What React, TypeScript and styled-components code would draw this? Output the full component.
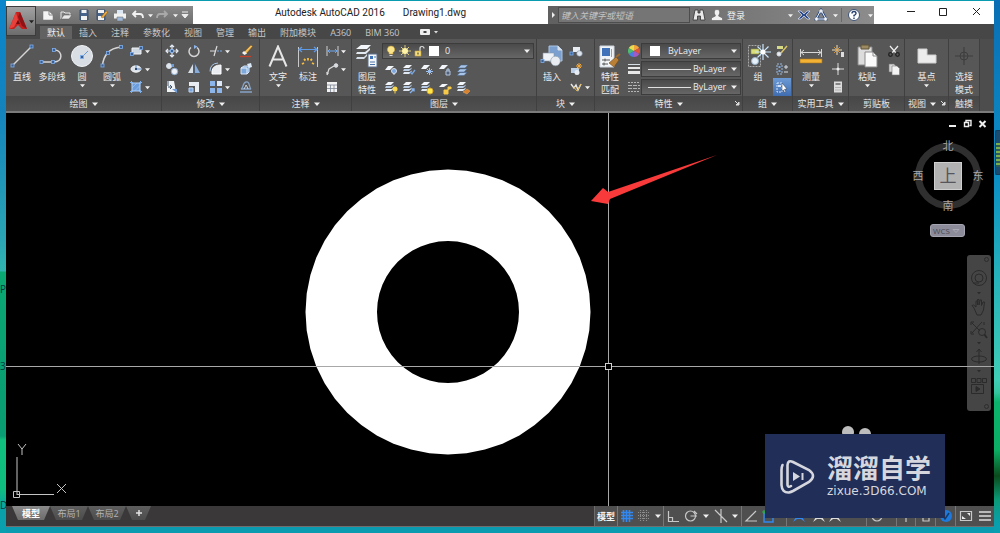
import React from "react";
import styled, { createGlobalStyle, css } from "styled-components";

const Global = createGlobalStyle`
  *, *::before, *::after { box-sizing: border-box; }
  html, body { margin: 0; padding: 0; }
  body, button, input, select {
    font-family: "Open Sans", "Noto Sans CJK SC", sans-serif;
    font-size: 9px;
    line-height: 13px;
  }
  svg { display: block; flex: none; }
`;

/* ---------- shell ---------- */

const Desktop = styled.div`
  position: relative;
  display: flex;
  min-height: 100vh;
  padding: 1px 6px 6px;
  overflow: hidden;
  background:
    linear-gradient(#0b86cc 0, #1483bd 110px, #2ba5b4 240px, #31b5b0 271px, #0aa873 272px, #0a9c72 436px, #10c07c 440px, #0fbd80 490px, #0aa0a8 510px, #0a9fb0 100%) left / 6px 100% no-repeat,
    linear-gradient(#0a6fb4 0, #0b79bb 60px, #0c8fc4 180px, #27b3ba 280px, #3fcdb6 380px, #36c5a0 392px, #0cb26c 402px, #0cae64 450px, #0b4a1c 476px, #0c9a78 500px, #0a9fb0 525px) right / 6px 100% no-repeat,
    #0b9bb0;
`;

const DeskLabel = styled.span<{ $top: number }>`
  position: absolute;
  left: 0;
  top: ${(p) => p.$top}px;
  width: 6px;
  overflow: hidden;
  color: #063a40;
  font-size: 10px;
`;

const Gadget = styled.div`
  position: absolute;
  right: 0;
  top: 130px;
  width: 5px;
  height: 45px;
  border: 1px solid #123c5c;
  border-right: 0;
  border-radius: 2px 0 0 2px;
  background: repeating-linear-gradient(#7cae4e 0 2px, #2c5a54 2px 4px) 0 12px / 100% 24px no-repeat, #1b4b6e;
`;

const Frame = styled.div`
  position: relative;
  flex: 1;
  min-width: 0;
  display: flex;
  flex-direction: column;
  background: #3a3a3a;
  border-bottom: 1px solid #6f6f6f;
`;

/* ---------- header ---------- */

const Header = styled.header`
  display: grid;
  grid-template-columns: 30px 1fr;
  background: #474747;
`;

const AppCell = styled.div`
  border-top: 5px solid #fff;
`;

const AppButton = styled.button`
  display: flex;
  align-items: center;
  justify-content: center;
  gap: 1px;
  width: 30px;
  height: 30px;
  padding: 0;
  border: 1px solid #3c3c3c;
  background: linear-gradient(#a2a2a2, #6c6c6c);
`;

const TitleBar = styled.div`
  display: flex;
  height: 23px;
  background: #fff;
`;

const barFill = css`
  display: flex;
  align-items: center;
  height: 18px;
  margin-top: 5px;
  background: linear-gradient(#8a8a8a, #6e6e6e);
`;

const QuickBar = styled.div`
  ${barFill}
  width: 157px;
  padding-left: 3px;
`;

const TitleText = styled.h1`
  flex: 1;
  display: flex;
  align-items: center;
  justify-content: center;
  gap: 18px;
  margin: 0;
  color: #222;
  font-family: Roboto, "Noto Sans CJK SC", sans-serif;
  font-size: 10px;
  font-weight: 400;
  white-space: nowrap;
`;

const InfoBar = styled.div`
  ${barFill}
  width: 326px;
  background: linear-gradient(90deg, #606060, #787878 60%, #8c8c8c);
`;

const Search = styled.input`
  width: 132px;
  height: 16px;
  padding: 0 2px;
  border: 1px solid #4d4d4d;
  background: #757575;
  font-size: 9px;
  font-style: italic;
  &::placeholder { color: #c4c4c4; opacity: 1; }
`;

const Plain = styled.button<{ $w: number }>`
  display: flex;
  align-items: center;
  justify-content: center;
  width: ${(p) => p.$w}px;
  height: 100%;
  padding: 0;
  border: 0;
  background: none;
  color: #f2f2f2;
  white-space: nowrap;
`;

const Grow = styled.span`
  flex: 1;
`;

const VLine = styled.span`
  width: 1px;
  height: 14px;
  background: #6a6a6a;
`;

const WinButtons = styled.div`
  display: flex;
  padding-left: 20px;
  width: 120px;
`;

const TabRow = styled.nav`
  display: flex;
  align-items: flex-end;
  height: 15px;
  padding-left: 4px;
  background: #474747;
`;

const Tab = styled.button<{ $active?: boolean }>`
  height: 13px;
  padding: 0 7px;
  border: 0;
  background: ${(p) => (p.$active ? "#626262" : "none")};
  color: ${(p) => (p.$active ? "#f0f0f0" : "#c6c6c6")};
  line-height: 12px;
  white-space: nowrap;
`;

/* ---------- ribbon ---------- */

const Ribbon = styled.div`
  display: flex;
  background: #4d4d4d;
  border-bottom: 2px solid #7a7a7a;
`;

const PanelBox = styled.section<{ $w: number }>`
  display: flex;
  flex-direction: column;
  flex: none;
  width: ${(p) => p.$w}px;
  border-right: 1px solid #404040;
  background: #575757;
`;

const PanelBody = styled.div<{ $pad: number }>`
  display: flex;
  height: 57px;
  padding: 3px 0 0 ${(p) => p.$pad}px;
`;

const PanelTitle = styled.div<{ $narrow: boolean }>`
  position: relative;
  display: flex;
  align-items: center;
  justify-content: center;
  gap: 4px;
  height: 15px;
  padding-right: ${(p) => (p.$narrow ? 9 : 0)}px;
  background: linear-gradient(#474747, #505050);
  color: #e6e6e6;
  white-space: nowrap;
`;

const Launcher = styled.button`
  position: absolute;
  right: 1px;
  top: 3px;
  padding: 0;
  border: 0;
  background: none;
`;

const BigButton = styled.button<{ $w?: number }>`
  display: flex;
  flex-direction: column;
  align-items: center;
  flex: none;
  width: ${(p) => p.$w ?? 30}px;
  height: 54px;
  padding: 0;
  border: 0;
  background: none;
  color: #ececec;
  white-space: nowrap;
`;

const BigIcon = styled.span`
  display: flex;
  align-items: center;
  justify-content: center;
  height: 28px;
`;

const SmallColumn = styled.div<{ $w?: number }>`
  display: flex;
  flex-direction: column;
  flex: none;
  width: ${(p) => p.$w ?? 26}px;
`;

const SmallRow = styled.div`
  display: flex;
`;

const SmallButton = styled.button<{ $w?: number; $on?: boolean }>`
  display: flex;
  align-items: center;
  flex: none;
  width: ${(p) => p.$w ?? 18}px;
  height: 18px;
  padding: 0;
  border: 0;
  background: ${(p) => (p.$on ? "linear-gradient(#6d9bd6, #3f6db0)" : "none")};
`;

const SmallIcon = styled.span`
  display: flex;
  justify-content: center;
  width: 18px;
  flex: none;
`;

const Spread = styled.div`
  flex: 1;
  display: flex;
  flex-direction: column;
  gap: 2px;
  padding: 1px 2px 0 0;
`;

const Combo = styled.div<{ $tight?: boolean }>`
  display: flex;
  align-items: center;
  gap: ${(p) => (p.$tight ? 2 : 4)}px;
  height: 16px;
  padding: 0 3px 0 ${(p) => (p.$tight ? 2 : 6)}px;
  border: 1px solid #3c3c3c;
  background: linear-gradient(#4a4a4a, #666);
`;

const Choice = styled.select`
  flex: 1;
  min-width: 0;
  height: 14px;
  padding: 0;
  border: 0;
  appearance: none;
  background: none;
  color: #ececec;
  font-size: 9px;
  line-height: 14px;
`;

const Swatch = styled.span`
  width: 10px;
  height: 10px;
  margin: 0 4px 0 2px;
  background: #fff;
`;

const Stroke = styled.span`
  width: 43px;
  height: 1px;
  margin-right: -2px;
  background: #e0e0e0;
`;

/* ---------- drawing area ---------- */

const Canvas = styled.main`
  position: relative;
  flex: 1;
  min-height: 300px;
  overflow: hidden;
  background: #000;
`;

const Drawing = styled.svg`
  position: absolute;
  inset: 0;
  width: 100%;
  height: 100%;
  pointer-events: none;
`;

const DocButtons = styled.div`
  position: absolute;
  top: 4px;
  right: 4px;
  display: flex;
`;

const Cube = styled.div`
  position: absolute;
  top: 26px;
  right: 9px;
  display: grid;
  grid-template: 14px 1fr 14px / 14px 1fr 14px;
  place-items: center;
  width: 74px;
  height: 74px;
  color: #a8a8a8;
  font-size: 11px;
  line-height: 14px;
`;

const CubeRing = styled.span`
  position: absolute;
  inset: 4px;
  border: 7px solid #2f2f2f;
  border-radius: 50%;
`;

const Point = styled.span<{ $area: string }>`
  position: relative;
  grid-area: ${(p) => p.$area};
`;

const CubeFace = styled.button`
  position: relative;
  grid-area: 2 / 2;
  width: 28px;
  height: 28px;
  padding: 0;
  border: 1px solid #cfcfcf;
  background: #b2b2b2;
  color: #55555c;
  font-size: 17px;
  line-height: 24px;
`;

const Wcs = styled.button`
  position: absolute;
  top: 111px;
  right: 29px;
  display: flex;
  align-items: center;
  gap: 2px;
  width: 35px;
  height: 13px;
  padding: 0 2px;
  border: 1px solid #a5a5b2;
  border-radius: 3px;
  background: #8b8b99;
  color: #4a4a55;
  font-size: 8px;
  line-height: 11px;
`;

const NavBar = styled.div`
  position: absolute;
  top: 142px;
  right: 3px;
  display: flex;
  flex-direction: column;
  align-items: center;
  width: 24px;
  height: 156px;
  padding-top: 10px;
  border-radius: 3px;
  background: #454545;
`;

const NavButton = styled.button<{ $h: number }>`
  display: flex;
  align-items: center;
  justify-content: center;
  width: 24px;
  height: ${(p) => p.$h}px;
  padding: 0;
  border: 0;
  background: none;
`;

const NavDot = styled.span<{ $bottom?: boolean }>`
  position: absolute;
  right: 2px;
  ${(p) => (p.$bottom ? "bottom: 2px;" : "top: 2px;")}
  width: 5px;
  height: 5px;
  border: 1px solid #2c2c2c;
  border-radius: 50%;
`;

const Ucs = styled.svg`
  position: absolute;
  left: 6px;
  bottom: 2px;
`;

/* ---------- status bar ---------- */

const StatusBar = styled.footer`
  display: flex;
  height: 20px;
  background: #3a3838;
`;

const LayoutTabs = styled.div`
  display: flex;
  flex: 1;
  height: 14px;
  padding-left: 6px;
`;

const LayoutTab = styled.button<{ $active?: boolean; $w?: number }>`
  width: ${(p) => p.$w ?? 38}px;
  height: 14px;
  padding: 0;
  border: 0;
  clip-path: polygon(0 0, 100% 0, calc(100% - 6px) 100%, 6px 100%);
  background: ${(p) => (p.$active ? "linear-gradient(#8a8a8a, #6c6c6c)" : "linear-gradient(#5e5e5e, #4c4c4c)")};
  color: ${(p) => (p.$active ? "#fff" : "#b4b4b4")};
  font-weight: ${(p) => (p.$active ? 700 : 400)};
  white-space: nowrap;
`;

const PlusTab = styled(LayoutTab)`
  display: flex;
  align-items: center;
  justify-content: center;
`;

const StatusTools = styled.div`
  display: flex;
  height: 20px;
  border-left: 1px solid #6c6c6c;
  background: #4f4f4f;
`;

const StatusButton = styled.button<{ $w: number; $edge?: boolean }>`
  display: flex;
  align-items: center;
  justify-content: center;
  width: ${(p) => p.$w}px;
  height: 20px;
  padding: 0;
  border: 0;
  border-right: ${(p) => (p.$edge ? "1px solid #777" : "0")};
  background: none;
  color: #f4f4f4;
  font-weight: 700;
  white-space: nowrap;
`;

/* ---------- site badge ---------- */

const Badge = styled.aside`
  position: absolute;
  right: 49px;
  bottom: 8px;
  display: flex;
  align-items: center;
  gap: 12px;
  width: 180px;
  height: 84px;
  padding-left: 15px;
  background: #202e58;
  color: #d6d7de;
`;

const BadgeEars = styled.svg`
  position: absolute;
  left: 76px;
  bottom: 84px;
`;

const BadgeName = styled.div`
  font-family: "Liberation Sans", "Noto Sans CJK SC", sans-serif;
  font-size: 26px;
  font-weight: 700;
  line-height: 30px;
`;

const BadgeSite = styled.div`
  font-family: "DejaVu Sans", sans-serif;
  font-size: 12px;
  line-height: 14px;
`;

/* ---------- icons ---------- */

const Arrow = ({ s = 6, c = "#f0f0f0" }: { s?: number; c?: string }) => (
  <svg width={s} height={s} viewBox="0 0 6 6"><path d="M0 1.5h6L3 5z" fill={c} /></svg>
);

const Ic = ({ w = 14, h, children }: { w?: number; h?: number; children: React.ReactNode }) => (
  <svg width={w} height={h ?? w} viewBox={`0 0 ${w} ${h ?? w}`} fill="none" stroke="#d8dee6" strokeWidth="1">{children}</svg>
);

const Node = ({ x, y }: { x: number; y: number }) => (
  <rect x={x - 1.5} y={y - 1.5} width="3" height="3" fill="#3c5f94" stroke="#7fb0ee" strokeWidth="0.8" />
);

const Sheets = ({ x = 1, y = 2 }: { x?: number; y?: number }) => (
  <g transform={`translate(${x} ${y})`} stroke="none">
    <path d="M3 0h6L6 3H0z" fill="#f3f6fa" />
    <path d="M1 4h6l1.500-1.500V4L6 6H0z" fill="#b9cbe2" />
    <path d="M1 7h6l1.500-1.500V7L6 9H0z" fill="#dfe8f2" />
  </g>
);

const icons = {
  newFile: <Ic><path d="M2 3h6l4 4v5H2z" fill="#f4f4f4" stroke="#777" strokeWidth=".5" /><path d="M8 3v4h4" stroke="#888" /></Ic>,
  open: <Ic><path d="M2 11V4h3l1 1h5v2" stroke="#e8e8e8" /><path d="M2 11l3-4h8l-3 4z" fill="#e8e8e8" stroke="#555" strokeWidth=".5" /></Ic>,
  save: <Ic><path d="M3 2h8v10H3z" fill="#47658c" stroke="#39506e" /><path d="M4.500 2h5v3h-5zM4 8h6v4H4z" fill="#f2f2f2" stroke="none" /></Ic>,
  saveAs: <Ic><path d="M2 2h8v10H2z" fill="#47658c" stroke="#39506e" /><path d="M3 2h6v3H3zM3 8h6v4H3z" fill="#f2f2f2" stroke="none" /><path d="M6 9l5-6 2 1-5 6z" fill="#f3ac3c" stroke="#7e5316" strokeWidth=".5" /></Ic>,
  print: <Ic><path d="M4 2h6v4H4z" fill="#dbe6f4" stroke="none" /><path d="M1 5.500h12v5H1z" fill="#f0f0f0" stroke="none" /><path d="M4 9h6v4H4z" fill="#9db7d8" stroke="#666" strokeWidth=".5" /></Ic>,
  undo: <Ic><path d="M5 3L2 6l3 3M2.500 6H9q3 0 3 4" stroke="#f2f2f2" strokeWidth="1.800" /></Ic>,
  redo: <Ic><path d="M9 3l3 3-3 3M11.500 6H5Q2 6 2 10" stroke="#a9a9a9" strokeWidth="1.800" /></Ic>,
  binoculars: <Ic><path d="M3 2h3v3h2V2h3l2 10H8.500V8h-3v4H1z" fill="#e9e9e9" stroke="#333" strokeWidth=".8" /></Ic>,
  person: <Ic><path d="M7 1.500c2.500 0 3 2 2.500 4L8.500 8l4 2v2.500h-11V10l4-2-1-2.500C4 3.500 4.500 1.500 7 1.500z" fill="#f0f0f0" stroke="#555" strokeWidth=".5" /></Ic>,
  exchange: <Ic><path d="M1 3h3l3 3 3-3h3L9 7l4 4h-3L7 8l-3 3H1l4-4z" fill="#2b4b8f" stroke="#dfe6f5" strokeWidth=".7" /></Ic>,
  a360: <Ic><path d="M7 2l5 9H2z" stroke="#2f4d80" strokeWidth="2.600" /><path d="M7 2l5 9H2z" stroke="#e8eef8" /><circle cx="7" cy="3" r="1.300" fill="#fff" /><circle cx="2.500" cy="11" r="1.300" fill="#fff" /><circle cx="11.500" cy="11" r="1.300" fill="#fff" /></Ic>,
  help: <Ic><circle cx="7" cy="7" r="5.500" fill="#fff" stroke="#3d5276" /><path d="M5 5.500q0-2 2-2t2 2Q9 6.500 7 7.500v1M7 9.500V11" stroke="#27406e" strokeWidth="1.400" /></Ic>,

  line: <Ic w={24}><path d="M2.500 21.500l19-19" stroke="#d6d6d6" strokeWidth="1.500" /><Node x={2.500} y={21.500} /><Node x={21.500} y={2.500} /></Ic>,
  pline: <Ic w={26} h={22}><path d="M2 17h13c9 0 9-11 1-12" stroke="#d6d6d6" strokeWidth="1.500" /><Node x={2.500} y={17} /><Node x={14} y={17} /><Node x={15} y={5} /></Ic>,
  circle: <Ic w={24}><circle cx="12" cy="12" r="10.500" fill="#d9dee4" stroke="#f1f4f7" /><path d="M12 13l6-6" stroke="#6b98d6" /><Node x={12} y={13} /></Ic>,
  arc: <Ic w={24}><path d="M2.500 22C3 12 9 4 21 3" stroke="#d6d6d6" strokeWidth="1.500" /><Node x={2.500} y={21.500} /><Node x={8} y={9} /><Node x={21} y={3} /></Ic>,
  rect: <Ic><path d="M3 4h9v6H3z" fill="#cfd7e0" stroke="#f0f3f6" /><Node x={3} y={10} /><Node x={12} y={4} /></Ic>,
  ellipse: <Ic><ellipse cx="7" cy="7" rx="5" ry="3.200" fill="#dde3ea" stroke="#f4f6f9" /><path d="M7 6v-3M7 7h5" stroke="#5b87c4" /><path d="M6 6h2v2H6z" fill="#2d4a78" stroke="none" /></Ic>,
  hatch: <Ic><path d="M3 3h8v8H3z" fill="#6c9ddd" stroke="#b5d2f7" /><path d="M3 8l5-5M5.500 11L11 5.500" stroke="#a9cbf5" strokeWidth=".6" /><path d="M1 2.500h3M10 2.500h3M1 11.500h3M10 11.500h3M2.500 1v3M11.500 1v3M2.500 10v3M11.500 10v3" stroke="#7fb0ee" /></Ic>,
  move: <Ic><path d="M7 1v12M1 7h12M5 3l2-2 2 2M5 11l2 2 2-2M3 5L1 7l2 2M11 5l2 2-2 2" stroke="#e4ebf4" strokeWidth="1.200" /><path d="M5.500 5.500h3v3h-3z" fill="#3a5f96" stroke="#8bb4ea" /></Ic>,
  rotate: <Ic><path d="M4 3.500a5 5 0 1 0 6 0" stroke="#d5d5d5" strokeWidth="1.500" /><path d="M7 1l3.500 1.500L7 5z" fill="#8bb4ea" stroke="none" /></Ic>,
  trim: <Ic><path d="M1 7h6M5 12l3-10" stroke="#dcdcdc" strokeWidth="1.200" /><path d="M8 7h6" stroke="#7faee8" strokeDasharray="2 1" /></Ic>,
  erase: <Ic><path d="M5 8l7-7 1.500 1.500L7 10z" fill="#f3bd58" stroke="#7a5316" strokeWidth=".5" /><path d="M3 9l2-2 3 2.500L5.500 11z" fill="#f2f2f2" stroke="none" /><path d="M1 12.500h11" stroke="#c3402a" strokeWidth="1.300" /></Ic>,
  copy: <Ic><circle cx="4" cy="4" r="2.500" fill="#dfe6ee" /><path d="M6 2h3v3H7z" fill="#6e9ad6" stroke="none" /><circle cx="9.500" cy="9.500" r="3.200" fill="#eef2f6" stroke="#89a8d0" /></Ic>,
  mirror: <Ic><path d="M6 2v9H1z" fill="#d9dfe6" stroke="none" /><path d="M8 2v9h5z" fill="#87acd9" stroke="none" /><path d="M7 1v12" stroke="#4a6892" /></Ic>,
  fillet: <Ic><path d="M3 12V9q1-6 9-6v9z" fill="#e8ecf1" stroke="#fff" /><path d="M1 9.500q0-8 8-8.500" stroke="#a9c4e6" /></Ic>,
  explode: <Ic><path d="M2 6l3-2h5v6l-2 2H2z" fill="#7ea9dd" stroke="#d5e4f6" /><path d="M8 2l4-1 1 4-3 1z" fill="#dce9f8" stroke="none" /><path d="M2 6h6v6" stroke="#e8f1fb" /></Ic>,
  stretch: <Ic><path d="M2 1h7l2 11H2z" fill="#f0f3f6" stroke="none" /><path d="M3 1v5M3 7h4l-2-2M7 7l-2 2" stroke="#40566f" /><path d="M7 9h5v4z" fill="#6e9ad6" stroke="none" /></Ic>,
  scale: <Ic><path d="M2 2h10v10H8V6H2z" fill="#e8edf3" stroke="none" /><path d="M2 8h4v4H2z" fill="#7ba6df" stroke="#bcd4f3" /></Ic>,
  array: <Ic><path d="M1 1h5v5H1zM1 8h5v5H1zM8 8h5v5H8z" fill="#8cb5ec" stroke="none" /><path d="M8 1h5v5H8z" fill="#dce8f7" stroke="none" /></Ic>,
  offset: <Ic><path d="M1 12h12M2 9c3-1 1-6 5-7s3 6 5 7z" stroke="#87a3c6" strokeWidth="1.300" /><path d="M5 9q2-3 2-4t2 4" stroke="#cfd9e5" /></Ic>,

  text: <Ic w={20} h={22}><path d="M1.500 21.500L10 1.500l8.500 20M5 14.500h10" stroke="#e6e6e6" strokeWidth="2" /></Ic>,
  dim: <Ic w={22} h={24}><path d="M1.500 3v20M20.500 3v20" stroke="#c9c9c9" /><path d="M2 5.500h18M5 3L2 5.500 5 8M17 3l3 2.500L17 8" stroke="#5f9ae6" strokeWidth="1.200" /><path d="M5 20l2-1M7 15l1.500 1.500M11 14v2.500M15 15l-1.500 1.500M17 20l-2-1" stroke="#f5bd42" strokeWidth="1.800" /></Ic>,
  linDim: <Ic><path d="M2 2v10M13 2v10" stroke="#d0d0d0" /><path d="M3 7h9M5 5L3 7l2 2M10 5l2 2-2 2" stroke="#74a8ea" /></Ic>,
  leader: <Ic><path d="M2 13l2-6 5-3" stroke="#dcdcdc" strokeWidth="1.200" /><circle cx="11" cy="3.500" r="1.800" fill="#ddd" /><path d="M1 10l1 3 2-2z" fill="#ddd" stroke="none" /></Ic>,
  table: <Ic><path d="M2 2h10v10H2z" fill="#f2f2f2" stroke="none" /><path d="M2 5h10M2 8.500h10M5.500 5v7M9 5v7" stroke="#7c8796" strokeWidth=".8" /></Ic>,
  layerProps: (
    <Ic w={24}>
      <g stroke="none"><path d="M6 1h10l-4 4H1z" fill="#f3f6fa" /><path d="M2 8h8l5-4v2l-4 4H1z" fill="#e3e9f0" /><path d="M2 13h7l3-3v2l-3 3H1z" fill="#d5dee8" /></g>
      <path d="M13 10h9v13h-9z" fill="#f4f6f9" stroke="#5a6f8c" /><path d="M15 12h3v3h-3z" fill="#3f72b8" stroke="none" /><path d="M15 18h5M15 20.500h5M19 13h2" stroke="#4a72a8" />
    </Ic>
  ),
  bulb: <Ic w={12}><path d="M6 1a3.500 3.500 0 0 1 2 6.500V9H4V7.500A3.500 3.500 0 0 1 6 1z" fill="#fbe58a" stroke="#c69a2c" strokeWidth=".5" /><path d="M4.500 10.500h3" stroke="#ddd" /></Ic>,
  sun: <Ic w={12}><path d="M6 0v12M0 6h12M2 2l8 8M10 2l-8 8" stroke="#d9c87a" /><circle cx="6" cy="6" r="3" fill="#fff3a6" stroke="none" /></Ic>,
  lock: <Ic w={12}><path d="M7 6V3.500q0-2 2-2t2 2" stroke="#ddd" strokeWidth="1.200" /><path d="M2 6h6v5H2z" fill="#f4dd7a" stroke="#c8a13a" strokeWidth=".6" /><path d="M5 7.500v2" stroke="#333" /></Ic>,
  lay1: <Ic><path d="M4 3h6L6 7H1z" fill="#f3f6fa" stroke="none" /><circle cx="10" cy="8" r="2.500" fill="#7ba6df" /><path d="M10 10v2" /></Ic>,
  lay2: <Ic><Sheets /><path d="M8 9l2 2 3-4" stroke="#7ba6df" strokeWidth="1.300" /></Ic>,
  lay3: <Ic><path d="M4 2h6L6 6H1z" fill="#f3f6fa" stroke="none" /><path d="M9.500 5v7M6 8.500h7M7 6l5 5M12 6l-5 5" stroke="#9dc0ee" /></Ic>,
  lay4: <Ic><path d="M4 2h6L6 6H1z" fill="#f3f6fa" stroke="none" /><path d="M8 8h4v4H8zM9 8V6h2v2" fill="#4f6078" stroke="#b3c6de" /></Ic>,
  lay5: <Ic><path d="M5 2h7l-3 3H2zM4 6h7l-3 3H1zM4 9.500h7L8 12.500H1z" fill="#a9c4e6" stroke="#40618e" strokeWidth=".5" /></Ic>,
  lay6: <Ic><Sheets y={1} /><circle cx="11" cy="8" r="2.500" fill="#fbd94e" stroke="none" /><path d="M11 10.500v2" stroke="#fbd94e" /></Ic>,
  lay7: <Ic><Sheets y={1} /><path d="M8 12l4-4M9.500 8H12v2.500" stroke="#86b3f0" strokeWidth="1.300" /></Ic>,
  lay8: <Ic><Sheets y={1} /><circle cx="10" cy="10" r="3" fill="#ffe94a" stroke="#d9a52c" /></Ic>,
  lay9: <Ic><path d="M4 3h6L6 6H1z" fill="#f3f6fa" stroke="none" /><path d="M6 9h4v4H6zM10 9V6h3v2" fill="#f7c948" stroke="#f7c948" /></Ic>,
  lay10: <Ic><Sheets y={1} /><path d="M7 11l4-3 3 2-3 3z" fill="#d9822c" stroke="#f0a65a" strokeWidth=".5" /></Ic>,

  insert: <Ic w={24}><path d="M9 2h9l4 4v11H9z" fill="#7ba0cf" stroke="#a9c4e6" /><path d="M18 2v4h4" fill="#d6e3f3" /><path d="M3 9h11v8H3z" fill="#eef1f5" stroke="#8b98a8" strokeWidth=".6" /><circle cx="15.500" cy="17" r="4.800" fill="#e9edf2" stroke="#8b98a8" strokeWidth=".6" /><Node x={2.500} y={17} /></Ic>,
  blk1: <Ic><path d="M4 3h7v5H4z" fill="#e8edf3" stroke="none" /><circle cx="10.500" cy="9.500" r="2.800" fill="#dfe5ec" stroke="#75869c" strokeWidth=".6" /><Node x={2.500} y={9.500} /></Ic>,
  blk2: <Ic><path d="M2 6h8v5H2z" fill="#bcd0ea" stroke="none" /><circle cx="8" cy="10.500" r="2.500" fill="#e8edf3" stroke="none" /><path d="M10 1v6M7 4h6M8 2l4 4M12 2L8 6" stroke="#f4a93d" /></Ic>,
  blk3: <Ic><path d="M2 4l3 4 2-3 2 5 3-6" stroke="#e9e9e9" strokeWidth="1.400" /><path d="M4 6l4 5 4-7" stroke="#e3b752" /></Ic>,
  matchProps: <Ic w={24}><path d="M2 2h14v21H2z" fill="#f1f4f7" stroke="#cdd6e0" /><path d="M4 4h8v8H4z" fill="#3f72b8" stroke="none" /><path d="M13.500 5v8" stroke="#8ba4c4" /><path d="M4 16h8M4 20h6M7 14.500v3M6 18.500v3" stroke="#555" /><path d="M11 19l7-6 3 3-5 7z" fill="#b98035" stroke="#6e4717" strokeWidth=".6" /><path d="M18 13l4-3" stroke="#9a6a2f" strokeWidth="2" /></Ic>,
  color: <Ic w={12}><g stroke="none"><path d="M6 6V0a6 6 0 0 1 5.200 3z" fill="#f2a33a" /><path d="M6 6l5.200-3a6 6 0 0 1 0 6z" fill="#e0523a" /><path d="M6 6l5.200 3A6 6 0 0 1 6 12z" fill="#a05bc8" /><path d="M6 6v6a6 6 0 0 1-5.200-3z" fill="#4a7fe0" /><path d="M6 6L.8 9a6 6 0 0 1 0-6z" fill="#4fbb72" /><path d="M6 6L.8 3A6 6 0 0 1 6 0z" fill="#e6dc52" /></g></Ic>,
  lweight: <Ic w={12}><path d="M0 1.500h12" /><path d="M0 5h12" strokeWidth="2" stroke="#e8e8e8" /><path d="M0 9.500h12" strokeWidth="3" stroke="#e8e8e8" /></Ic>,
  ltype: <Ic w={12}><path d="M0 1.500h12M0 10.500h12" stroke="#b4b4b4" strokeDasharray="2 1" /><path d="M0 4.500h12M0 7.500h12" stroke="#b4b4b4" strokeDasharray="4 1" /></Ic>,
  group: <Ic w={26}><path d="M3.500 2.500h12v21h-12z" stroke="#a9a9a9" strokeDasharray="2 1" /><path d="M6 6h8v5H6z" fill="#d9de7a" stroke="#8b8e3f" strokeWidth=".6" /><circle cx="10" cy="18" r="3.500" fill="#e6f0f8" stroke="#9ab3c8" /><path d="M18 1v16M10 9h16M12.500 3.500l11 11M23.500 3.500l-11 11" stroke="#c8e6ff" strokeWidth="1.200" /><circle cx="18" cy="9" r="2.500" fill="#fff" stroke="none" /></Ic>,
  ungroup: <Ic><path d="M2 2h6v3H2z" fill="#d6da84" stroke="none" /><circle cx="4" cy="10" r="2" fill="#e6ecf2" /><path d="M6 9l6-7" stroke="#d9c46a" strokeWidth="1.500" /></Ic>,
  groupEdit: <Ic><path d="M2 2h5v10H2z" stroke="#9fb9dc" strokeDasharray="2 1" /><path d="M3.500 4h2v2h-2zM3.500 8h2v2h-2z" fill="#7ba6df" stroke="none" /><path d="M9 5h4M11 3v4M9 10h4" /></Ic>,
  groupSel: <Ic><path d="M2 3h5v9H2z" stroke="#d5e6fb" strokeDasharray="2 1" /><path d="M3 5h3v2H3z" fill="#cfe2fa" stroke="none" /><path d="M7 3l5 6-2.500.3L11 12l-1.500.6L8.500 10 7 11z" fill="#fff" stroke="#223a5c" strokeWidth=".5" /></Ic>,
  measure: <Ic w={24}><path d="M1.500 5v8M22.500 5v8M2 8.500h20M5 6L2 8.500 5 11M19 6l3 2.500L19 11" stroke="#d8d8d8" /><path d="M1 15h22v4H1z" fill="#f3b234" stroke="#a8741a" strokeWidth=".6" /></Ic>,
  idPoint: <Ic><path d="M6 1v10M1 6h10" stroke="#f0e0b8" /><path d="M3 3l6 6M9 3L3 9" stroke="#f0a53c" strokeWidth=".8" /><path d="M10 8h3v5h-3z" fill="#ddd" stroke="none" /></Ic>,
  point: <Ic><path d="M7 1v12M1 7h12" stroke="#dedede" /><circle cx="7" cy="7" r="1.500" fill="#eee" stroke="none" /></Ic>,
  calc: <Ic><path d="M3 1.500h8v11H3z" fill="#dcdcdc" stroke="none" /><path d="M4.500 4h5" stroke="#666" strokeWidth="1.500" /><path d="M4.500 7.500h5M4.500 10h5" stroke="#888" strokeDasharray="1 1" /></Ic>,
  paste: <Ic w={24}><path d="M3 3h14v18H3z" fill="#dcdcdc" stroke="#8a8a8a" /><path d="M6 1h8v4H6z" fill="#9b8a62" stroke="#5f543a" /><path d="M10 8h8l4 4v11H10z" fill="#fafafa" stroke="#8a8a8a" /><path d="M18 8v4h4" stroke="#8a8a8a" /></Ic>,
  cut: <Ic><path d="M3 2l6 7M11 2L5 9" stroke="#f0f0f0" strokeWidth="1.200" /><circle cx="3.500" cy="10.500" r="1.800" stroke="#222" strokeWidth="1.300" /><circle cx="10.500" cy="10.500" r="1.800" stroke="#222" strokeWidth="1.300" /></Ic>,
  copyClip: <Ic><path d="M2 2h5l2 2v6H2z" fill="#d6d6d6" stroke="#777" strokeWidth=".6" /><path d="M5 4h5l2.500 2.500V13H5z" fill="#f4f4f4" stroke="#777" strokeWidth=".6" /></Ic>,
  base: <Ic w={22} h={24}><path d="M2 5h9v6h9v8H2z" fill="#ececec" stroke="#cfcfcf" /></Ic>,
  touch: <Ic w={20}><path d="M10 1v18M1 10h18" stroke="#3e3e3e" strokeWidth="1.200" /><circle cx="10" cy="10" r="4" stroke="#3e3e3e" /></Ic>,
};

type IconName = keyof typeof icons;

/* ---------- composed parts ---------- */

const Panel = ({ w, pad = 0, title, arrow = true, launcher, children }: {
  w: number; pad?: number; title: string; arrow?: boolean; launcher?: boolean; children: React.ReactNode;
}) => (
  <PanelBox $w={w}>
    <PanelBody $pad={pad}>{children}</PanelBody>
    <PanelTitle $narrow={!!launcher && w < 60}>
      {title}
      {arrow && <Arrow />}
      {launcher && (
        <Launcher aria-label={`${title} 设置`}>
          <svg width="8" height="8" viewBox="0 0 8 8"><path d="M2 2l3 3M6 3v3H3z" stroke="#ddd" fill="#ddd" /></svg>
        </Launcher>
      )}
    </PanelTitle>
  </PanelBox>
);

const Big = ({ icon, label, second, arrow, w }: { icon: IconName; label: string; second?: string; arrow?: boolean; w?: number }) => (
  <BigButton $w={w}>
    <BigIcon>{icons[icon]}</BigIcon>
    <span>{label}</span>
    {second && <span>{second}</span>}
    {arrow && <Arrow s={5} />}
  </BigButton>
);

const Small = ({ icon, arrow, w, on }: { icon: IconName; arrow?: boolean; w?: number; on?: boolean }) => (
  <SmallButton $w={w ?? (arrow ? 28 : 18)} $on={on} aria-label={icon}>
    <SmallIcon>{icons[icon]}</SmallIcon>
    {arrow && <Arrow s={5} />}
  </SmallButton>
);

const tabs = ["默认", "插入", "注释", "参数化", "视图", "管理", "输出", "附加模块", "A360", "BIM 360"];
const modifyRows: IconName[][] = [
  ["move", "rotate", "trim", "erase"],
  ["copy", "mirror", "fillet", "explode"],
  ["stretch", "scale", "array", "offset"],
];
const layerRows: IconName[][] = [
  ["lay1", "lay2", "lay3", "lay4", "lay5"],
  ["lay6", "lay7", "lay8", "lay9", "lay10"],
];
const quick: IconName[] = ["newFile", "open", "save", "saveAs", "print", "undo"];

const ring = (r: number, sides: number) =>
  "M" + Array.from({ length: sides }, (_, i) => {
    const a = (i / sides) * Math.PI * 2;
    return `${(442 + r * Math.cos(a)).toFixed(1)} ${(199 + r * Math.sin(a)).toFixed(1)}`;
  }).join("L") + "Z";

const S = ({ children }: { children: React.ReactNode }) => (
  <svg width="16" height="16" viewBox="0 0 16 16" fill="none" stroke="#c8c8c8" strokeWidth="1.200">{children}</svg>
);

const gridPath = "M4.500 2v12M7.500 2v12M10.500 2v12M2 4.500h12M2 7.500h12M2 10.500h12";
const person = "M8 2l2 5 4 7-4-3H6l-4 3 4-7z";

export default function App() {
  return (
    <>
      <Global />
      <Desktop>
        <DeskLabel $top={283}>P</DeskLabel>
        <DeskLabel $top={360}>3</DeskLabel>
        <DeskLabel $top={499}>D</DeskLabel>
        <Gadget />
        <Frame>
          <Header>
            <AppCell>
              <AppButton aria-label="应用程序菜单">
                <svg width="20" height="20" viewBox="0 0 18 20">
                  <path d="M7 1h4l7 17h-5l-4-4-4 4H0z" fill="#c3201f" />
                  <path d="M7 1L0 18l5-2 4-7z" fill="#e8403a" />
                  <path d="M9 9l2 4H7z" fill="#6d0d10" />
                  <path d="M11 1l7 17-5-3-4-9z" fill="#8f1316" />
                </svg>
                <Arrow s={5} c="#222" />
              </AppButton>
            </AppCell>
            <div>
              <TitleBar>
                <QuickBar>
                  {quick.map((n) => <Plain key={n} $w={18} aria-label={n}>{icons[n]}</Plain>)}
                  <Plain $w={6} aria-label="放弃列表"><Arrow s={5} /></Plain>
                  <Plain $w={18} aria-label="重做">{icons.redo}</Plain>
                  <Plain $w={8} aria-label="重做列表"><Arrow s={5} /></Plain>
                  <Plain $w={12} aria-label="自定义">
                    <svg width="8" height="8" viewBox="0 0 8 8"><path d="M1 1h6M1 3.500h6L4 7z" stroke="#eee" strokeWidth="1" fill="#eee" /></svg>
                  </Plain>
                </QuickBar>
                <TitleText><span>Autodesk AutoCAD 2016</span><span>Drawing1.dwg</span></TitleText>
                <InfoBar>
                  <Plain $w={10} aria-label="展开"><svg width="5" height="6" viewBox="0 0 5 6"><path d="M1 0l3 3-3 3z" fill="#eee" /></svg></Plain>
                  <Search aria-label="搜索" placeholder="键入关键字或短语" />
                  <Plain $w={18} aria-label="搜索按钮">{icons.binoculars}</Plain>
                  <Plain $w={18} aria-label="用户">{icons.person}</Plain>
                  <Plain $w={20}>登录</Plain>
                  <Grow />
                  <Plain $w={10} aria-label="登录菜单"><Arrow s={5} /></Plain>
                  <Plain $w={18} aria-label="应用商店">{icons.exchange}</Plain>
                  <Plain $w={16} aria-label="A360 菜单">{icons.a360}</Plain>
                  <Plain $w={12} aria-label="更多"><Arrow s={5} /></Plain>
                  <VLine />
                  <Plain $w={24} aria-label="帮助">{icons.help}</Plain>
                  <Plain $w={8} aria-label="帮助菜单"><Arrow s={5} /></Plain>
                </InfoBar>
                <WinButtons>
                  <Plain $w={33} aria-label="最小化"><svg width="9" height="9" viewBox="0 0 9 9"><path d="M1 3.500h8" stroke="#222" /></svg></Plain>
                  <Plain $w={33} aria-label="最大化"><svg width="9" height="9" viewBox="0 0 9 9"><path d="M.5.5h7v7h-7z" stroke="#222" fill="none" /></svg></Plain>
                  <Plain $w={33} aria-label="关闭"><svg width="9" height="9" viewBox="0 0 9 9"><path d="M1 0l7 7M8 0L1 7" stroke="#222" /></svg></Plain>
                </WinButtons>
              </TitleBar>
              <TabRow>
                {tabs.map((t, i) => <Tab key={t} $active={i === 0}>{t}</Tab>)}
                <Plain $w={46} aria-label="显示选项">
                  <svg width="18" height="8" viewBox="0 0 18 8"><rect x="0" y="1" width="10" height="6" rx="1" fill="#eee" /><path d="M3.500 3h3v2h-3z" fill="#444" /><path d="M14 3h4l-2 2.500z" fill="#ddd" /></svg>
                </Plain>
              </TabRow>
            </div>
          </Header>

          <Ribbon>
            <Panel w={156} pad={1} title="绘图">
              <Big icon="line" label="直线" />
              <Big icon="pline" label="多段线" />
              <Big icon="circle" label="圆" arrow />
              <Big icon="arc" label="圆弧" arrow />
              <SmallColumn $w={32}>
                <Small icon="rect" arrow w={32} />
                <Small icon="ellipse" arrow w={32} />
                <Small icon="hatch" arrow w={32} />
              </SmallColumn>
            </Panel>
            <Panel w={98} pad={1} title="修改">
              <SmallColumn $w={96}>
                {modifyRows.map((row) => (
                  <SmallRow key={row[0]}>
                    {row.map((n, i) => <Small key={n} icon={n} arrow={i === 2} w={i === 2 ? 30 : 22} />)}
                  </SmallRow>
                ))}
              </SmallColumn>
            </Panel>
            <Panel w={92} pad={3} title="注释">
              <Big icon="text" label="文字" arrow />
              <Big icon="dim" label="标注" />
              <SmallColumn $w={28}>
                <Small icon="linDim" arrow />
                <Small icon="leader" arrow />
                <Small icon="table" />
              </SmallColumn>
            </Panel>
            <Panel w={185} title="图层">
              <Big icon="layerProps" label="图层" second="特性" />
              <Spread>
                <Combo $tight>
                  {icons.bulb}{icons.sun}{icons.lock}
                  <Swatch />
                  <Choice aria-label="图层"><option>0</option></Choice>
                  <Arrow />
                </Combo>
                <div>
                  {layerRows.map((row) => (
                    <SmallRow key={row[0]}>{row.map((n) => <Small key={n} icon={n} />)}</SmallRow>
                  ))}
                </div>
              </Spread>
            </Panel>
            <Panel w={58} title="块">
              <Big icon="insert" label="插入" />
              <SmallColumn $w={27}>
                <Small icon="blk1" />
                <Small icon="blk2" />
                <Small icon="blk3" arrow w={27} />
              </SmallColumn>
            </Panel>
            <Panel w={148} title="特性" launcher>
              <Big icon="matchProps" label="特性" second="匹配" />
              <SmallColumn $w={16}>
                <Small icon="color" w={16} />
                <Small icon="lweight" w={16} />
                <Small icon="ltype" w={16} />
              </SmallColumn>
              <Spread>
                <Combo><Swatch /><Choice aria-label="颜色"><option>ByLayer</option></Choice><Arrow /></Combo>
                <Combo><Stroke /><Choice aria-label="线宽"><option>ByLayer</option></Choice><Arrow /></Combo>
                <Combo><Stroke /><Choice aria-label="线型"><option>ByLayer</option></Choice><Arrow /></Combo>
              </Spread>
            </Panel>
            <Panel w={50} title="组">
              <Big icon="group" label="组" />
              <SmallColumn $w={18}>
                <Small icon="ungroup" />
                <Small icon="groupEdit" />
                <Small icon="groupSel" on />
              </SmallColumn>
            </Panel>
            <Panel w={56} title="实用工具">
              <Big icon="measure" label="测量" arrow w={36} />
              <SmallColumn $w={18}>
                <Small icon="idPoint" />
                <Small icon="point" />
                <Small icon="calc" />
              </SmallColumn>
            </Panel>
            <Panel w={56} title="剪贴板" arrow={false}>
              <Big icon="paste" label="粘贴" arrow w={36} />
              <SmallColumn $w={18}>
                <Small icon="cut" />
                <Small icon="copyClip" />
              </SmallColumn>
            </Panel>
            <Panel w={44} title="视图" launcher>
              <Big icon="base" label="基点" arrow w={43} />
            </Panel>
            <Panel w={31} title="触摸" arrow={false}>
              <Big icon="touch" label="选择" second="模式" />
            </Panel>
          </Ribbon>

          <Canvas>
            <DocButtons>
              <Plain $w={15} aria-label="最小化图形"><svg width="9" height="14" viewBox="0 0 9 14"><path d="M1 9h7" stroke="#eee" strokeWidth="2" /></svg></Plain>
              <Plain $w={15} aria-label="还原图形"><svg width="9" height="14" viewBox="0 0 9 14" fill="none" stroke="#eee"><path d="M3 5V3.500h5v5H6.500M1.500 5.500h4v4h-4z" strokeWidth="1.400" /></svg></Plain>
              <Plain $w={15} aria-label="关闭图形"><svg width="9" height="14" viewBox="0 0 9 14"><path d="M1.500 4l6 6M7.500 4l-6 6" stroke="#eee" strokeWidth="2" /></svg></Plain>
            </DocButtons>
            <Cube>
              <CubeRing />
              <Point $area="1 / 2">北</Point>
              <Point $area="2 / 1">西</Point>
              <CubeFace>上</CubeFace>
              <Point $area="2 / 3">东</Point>
              <Point $area="3 / 2">南</Point>
            </Cube>
            <Wcs>WCS<svg width="8" height="6" viewBox="0 0 8 6"><path d="M1 1.500h6L4 4.500z" fill="none" stroke="#a9a9b5" /></svg></Wcs>
            <NavBar>
              <NavDot />
              <NavButton $h={26} aria-label="控制盘"><svg width="18" height="18" viewBox="0 0 18 18" fill="none" stroke="#2b2b2b"><circle cx="9" cy="9" r="7.500" /><circle cx="9" cy="9" r="4" /><path d="M3 14h6" /></svg></NavButton>
              <Arrow s={4} c="#2b2b2b" />
              <NavButton $h={24} aria-label="平移"><svg width="18" height="18" viewBox="0 0 18 18" fill="none" stroke="#2b2b2b"><path d="M4 10L2 7.500 3.500 7 6 9V3h1.500v4V1.500H9V7l1-5h1.500v5.500L13 4h1.500l-1 8-2.500 5H7z" /></svg></NavButton>
              <NavButton $h={22} aria-label="范围缩放"><svg width="18" height="18" viewBox="0 0 18 18" fill="none" stroke="#2b2b2b"><path d="M2 2l8 8M12 1L2 12M1 4V1h3M14 1v3M1 10v3h3" /><circle cx="12" cy="11" r="3.500" /><path d="M14.500 13.500L17 17" strokeWidth="2" /></svg></NavButton>
              <Arrow s={4} c="#2b2b2b" />
              <NavButton $h={24} aria-label="动态观察"><svg width="18" height="18" viewBox="0 0 18 18" fill="none" stroke="#2b2b2b"><path d="M9 1v15M6.500 4L9 1l2.500 3" /><ellipse cx="9" cy="11" rx="7.500" ry="3" /></svg></NavButton>
              <Arrow s={4} c="#2b2b2b" />
              <NavButton $h={26} aria-label="ShowMotion"><svg width="18" height="18" viewBox="0 0 18 18" fill="none" stroke="#2b2b2b"><path d="M1.500 1.500h4v4h-4zM7 1.500h4v4H7zM12.500 1.500h4v4h-4zM1.500 7.500h12v9h-12z" /><path d="M6 9.500l4 2.500-4 2.500z" fill="#2b2b2b" /></svg></NavButton>
              <NavDot $bottom />
            </NavBar>
            <Drawing>
              <path d={ring(142.500, 48) + ring(71, 48)} fill="#fff" fillRule="evenodd" />
              <path d="M0 253.500h599M605 253.500h3000M602.500 0v250M602.500 257v2000" stroke="#a8a8a8" />
              <rect x="599.500" y="250.500" width="6" height="6" fill="#000" stroke="#d0d0d0" />
              <path d="M585 88l12-13 5 4L711 42 604 86l-2 5z" fill="#f93a3a" />
            </Drawing>
            <Ucs width="62" height="66" viewBox="0 0 62 66" fill="none" stroke="#c4c4c4">
              <path d="M5 19v38M5 56.500h37M1.500 53.500h6v6h-6z" />
              <path d="M6 6l4 5 4-5M10 11v6M45 46l9 9M54 46l-9 9" />
            </Ucs>
          </Canvas>

          <StatusBar>
            <LayoutTabs>
              <LayoutTab $active>模型</LayoutTab>
              <LayoutTab>布局1</LayoutTab>
              <LayoutTab>布局2</LayoutTab>
              <PlusTab $w={25} aria-label="新建布局">
                <svg width="12" height="12" viewBox="0 0 12 12"><path d="M6 3v6M3 6h6" stroke="#e4e4e4" strokeWidth="1.500" /></svg>
              </PlusTab>
            </LayoutTabs>
            <StatusTools>
              <StatusButton $w={23} $edge>模型</StatusButton>
              <StatusButton $w={17} aria-label="栅格"><S><path d={gridPath} stroke="#3288f0" strokeWidth="1.600" /></S></StatusButton>
              <StatusButton $w={17} aria-label="捕捉"><S><path d={gridPath} stroke="#8e8e8e" strokeDasharray="1 1" /></S></StatusButton>
              <StatusButton $w={12} $edge aria-label="捕捉菜单"><Arrow /></StatusButton>
              <StatusButton $w={18} aria-label="正交"><S><path d="M3.500 3v10.500H14M3.500 9.500h4v4" /></S></StatusButton>
              <StatusButton $w={18} aria-label="极轴"><S><circle cx="7.500" cy="8" r="5" /><path d="M7.500 8H14M11 3l3 3" /></S></StatusButton>
              <StatusButton $w={12} aria-label="极轴菜单"><Arrow /></StatusButton>
              <StatusButton $w={17} aria-label="等轴测"><S><path d="M2 2l12 12M8 1v14" /></S></StatusButton>
              <StatusButton $w={13} $edge aria-label="等轴测菜单"><Arrow /></StatusButton>
              <StatusButton $w={18} aria-label="追踪"><S><path d="M13 3L3 13h11" /></S></StatusButton>
              <StatusButton $w={18} aria-label="对象捕捉"><S><path d="M3 5h9v9H3z" stroke="#3288f0" strokeWidth="1.500" /><path d="M1 4h4M3 2v4" stroke="#2fae4a" /></S></StatusButton>
              <StatusButton $w={9} $edge aria-label="捕捉设置" />
              <StatusButton $w={24} aria-label="注释可见性"><S><path d={person} fill="#3288f0" stroke="none" /></S></StatusButton>
              <StatusButton $w={16} aria-label="自动缩放"><S><path d={person} fill="#ddd" stroke="none" /></S></StatusButton>
              <StatusButton $w={16} aria-label="注释比例"><S><path d={person} fill="#ddd" stroke="none" /></S></StatusButton>
              <StatusButton $w={24} $edge aria-label="比例" />
              <StatusButton $w={20} aria-label="工作空间"><S><circle cx="8" cy="8" r="5" /></S></StatusButton>
              <StatusButton $w={10} $edge aria-label="工作空间菜单" />
              <StatusButton $w={19} $edge aria-label="注释监视器"><S><path d="M8 2v12M2 8h12" /></S></StatusButton>
              <StatusButton $w={20} $edge aria-label="隔离对象"><S><path d="M5 6h6v7H5z" /></S></StatusButton>
              <StatusButton $w={20} $edge aria-label="硬件加速"><S><circle cx="8" cy="8" r="6" fill="#1d79dc" stroke="none" /><path d="M5 8l2 3 4-6" stroke="#173a66" strokeWidth="1.500" /></S></StatusButton>
              <StatusButton $w={19} aria-label="全屏"><S><path d="M2.500 3.500h11v9h-11z" /><path d="M9 5h3v3zM4 8v3h4z" fill="#eee" stroke="none" /></S></StatusButton>
              <StatusButton $w={19} aria-label="自定义状态栏"><S><path d="M2 4h12M2 8h12M2 12h12" stroke="#ddd" strokeWidth="1.500" /></S></StatusButton>
            </StatusTools>
          </StatusBar>

          <Badge>
            <BadgeEars width="32" height="8" viewBox="0 0 32 8"><ellipse cx="7" cy="6" rx="6" ry="6" fill="#bdbdbd" /><ellipse cx="24" cy="8" rx="6" ry="6" fill="#bdbdbd" /></BadgeEars>
            <svg width="35" height="37" viewBox="0 0 35 37" fill="none" stroke="#d6d7de" strokeWidth="2.600" strokeLinecap="round">
              <path d="M2.500 7Q1.500 9 1.500 12V27Q2 35 9 34.500 11 34 13 33L29 24Q33 21 33 18T29 12L13 4Q8 1.500 7.500 7V27Q8 30 11 28" />
              <path d="M13 14l7 4.500-7 4.500z" fill="#d6d7de" stroke="none" />
              <path d="M22.500 15v7" strokeWidth="2" strokeLinecap="butt" />
            </svg>
            <div>
              <BadgeName>溜溜自学</BadgeName>
              <BadgeSite>zixue.3D66.COM</BadgeSite>
            </div>
          </Badge>
        </Frame>
      </Desktop>
    </>
  );
}
